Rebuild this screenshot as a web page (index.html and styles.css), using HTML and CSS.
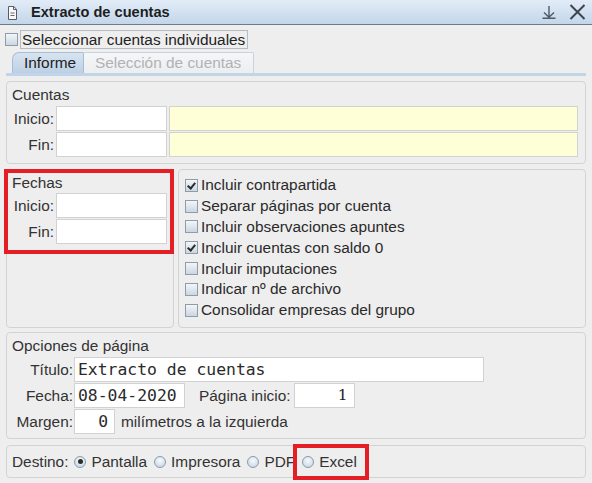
FILE: index.html
```html
<!DOCTYPE html>
<html lang="es">
<head>
<meta charset="utf-8">
<title>Extracto de cuentas</title>
<link rel="stylesheet" href="styles.css">
</head>
<body>
<div class="titlebar">
  <svg class="doc-icon" width="11" height="14" viewBox="0 0 11 14"><path d="M1.5 0.5H6.8L9.5 3.2V13.5H1.5Z" fill="#f6f8fa" stroke="#5c5c5c"/><path d="M6.5 0.5V3.5H9.5" fill="none" stroke="#5c5c5c"/><path d="M3.5 7H7.5M3.5 9.5H7.5" stroke="#6a6a6a"/></svg>
  <span class="title">Extracto de cuentas</span>
  <span class="spacer"></span>
  <svg class="tb-btn" width="16" height="14" viewBox="0 0 16 14"><path d="M8 1V12M3 7.5L8 12.2L13 7.5M1.5 13.2H14.5" fill="none" stroke="#505a64" stroke-width="1.4"/></svg>
  <svg class="tb-btn close" width="17" height="16" viewBox="0 0 17 16"><path d="M1.5 1L15.5 15M15.5 1L1.5 15" fill="none" stroke="#3c444c" stroke-width="2"/></svg>
</div>

<div class="selrow">
  <span class="cb"></span>
  <span class="sel-label">Seleccionar cuentas individuales</span>
</div>

<div class="tabs">
  <div class="tab active">Informe</div>
  <div class="tab disabled">Selección de cuentas</div>
</div>
<div class="tabline"></div>

<div class="main">
  <div class="panel cuentas">
    <div class="ptitle">Cuentas</div>
    <div class="frow"><span class="lbl">Inicio:</span><span class="inp w111"></span><span class="inp yellow grow"></span></div>
    <div class="frow"><span class="lbl">Fin:</span><span class="inp w111"></span><span class="inp yellow grow"></span></div>
  </div>

  <div class="mid">
    <div class="panel fechas">
      <div class="ptitle">Fechas</div>
      <div class="frow"><span class="lbl">Inicio:</span><span class="inp w111"></span></div>
      <div class="frow"><span class="lbl">Fin:</span><span class="inp w111"></span></div>
    </div>
    <div class="panel checks">
      <div class="chk"><span class="cb on"></span>Incluir contrapartida</div>
      <div class="chk"><span class="cb"></span>Separar páginas por cuenta</div>
      <div class="chk"><span class="cb"></span>Incluir observaciones apuntes</div>
      <div class="chk"><span class="cb on"></span>Incluir cuentas con saldo 0</div>
      <div class="chk"><span class="cb"></span>Incluir imputaciones</div>
      <div class="chk"><span class="cb"></span>Indicar nº de archivo</div>
      <div class="chk"><span class="cb"></span>Consolidar empresas del grupo</div>
    </div>
  </div>

  <div class="panel opciones">
    <div class="ptitle">Opciones de página</div>
    <div class="orow"><span class="olbl">Título:</span><span class="inp mono w410">Extracto de cuentas</span></div>
    <div class="orow"><span class="olbl">Fecha:</span><span class="inp mono w111">08-04-2020</span><span class="txt pag">Página inicio:</span><span class="inp serif right w61">1</span></div>
    <div class="orow"><span class="olbl">Margen:</span><span class="inp mono right w41">0</span><span class="txt mm">milímetros a la izquierda</span></div>
  </div>

  <div class="panel destino">
    <span class="dlbl">Destino:</span>
    <span class="rb on"></span><span class="rtxt">Pantalla</span>
    <span class="rb"></span><span class="rtxt">Impresora</span>
    <span class="rb"></span><span class="rtxt">PDF</span>
    <span class="rb"></span><span class="rtxt">Excel</span>
  </div>
</div>

<div class="mark mark-fechas"></div>
<div class="mark mark-excel"></div>
</body>
</html>
```

FILE: styles.css
```css
* { box-sizing: border-box; }
html, body { margin: 0; padding: 0; }
body {
  width: 592px;
  height: 483px;
  overflow: hidden;
  position: relative;
  background: #eeeeee;
  font-family: "Liberation Sans", Arial, sans-serif;
  font-size: 15.4px;
  color: #333333;
}

.titlebar {
  height: 25px;
  border-bottom: 1px solid #6e7c8a;
  background: linear-gradient(#e2ecf7, #c3d6ea);
  display: flex;
  align-items: center;
  padding: 0 6px 0 7px;
}
.doc-icon { display: block; margin-top: 1px; }
.title {
  margin-left: 13px;
  font-weight: bold;
  font-size: 14.6px;
  color: #1e1e1e;
}
.spacer { flex: 1; }
.tb-btn { display: block; }
.tb-btn.close { margin-left: 12px; }

.selrow {
  display: flex;
  align-items: center;
  height: 19px;
  margin-top: 5px;
  padding-left: 5px;
}
.sel-label {
  margin-left: 2px;
  border: 1px solid #b6bcc2;
  height: 19px;
  line-height: 17px;
  padding: 0 2px 0 1px;
  color: #222;
}

.cb {
  display: inline-block;
  width: 13px;
  height: 13px;
  border: 1px solid #8f9caa;
  background: linear-gradient(#f3f6f9, #cbd6e2);
  flex: none;
  position: relative;
}
.cb.on::after {
  content: "";
  position: absolute;
  left: 3px;
  top: 1px;
  width: 3px;
  height: 6px;
  border-right: 2px solid #2a2a2a;
  border-bottom: 2px solid #2a2a2a;
  transform: rotate(40deg);
}

.tabs {
  display: flex;
  margin-top: 3px;
  padding-left: 12px;
  height: 21px;
}
.tab {
  height: 21px;
  line-height: 20px;
  border: 1px solid #c9d3de;
  border-bottom: none;
  border-radius: 7px 2px 0 0;
  white-space: nowrap;
}
.tab.active {
  width: 72px;
  padding: 0 0 0 11px;
  background: linear-gradient(#d7e4f1, #bcd0e5);
  border-color: #a9bdd2;
  color: #222;
}
.tab.disabled {
  width: 170px;
  padding: 0 0 0 11px;
  border-radius: 0 2px 0 0;
  border-left: none;
  background: linear-gradient(#f4f6f8, #eceef0);
  color: #b0b2b4;
}
.tabline {
  height: 3px;
  margin: 0 6px;
  background: #c2d4e8;
}

.main {
  display: flex;
  flex-direction: column;
  padding: 5px 6px 0 6px;
}
.panel {
  border: 1px solid #d3d3d3;
  border-radius: 4px;
  background: #eeeeee;
}
.ptitle { height: 18px; line-height: 18px; }

.cuentas {
  height: 83px;
  padding: 4px 7px 5px 5px;
}
.frow {
  display: flex;
  align-items: center;
  height: 25px;
  margin-top: 1px;
}
.ptitle + .frow { margin-top: 2px; }
.lbl {
  width: 43px;
  text-align: right;
  padding-right: 1px;
  margin-right: 1px;
}
.inp {
  display: block;
  height: 25px;
  border: 1px solid #d2d2d2;
  background: #ffffff;
  color: #222;
}
.inp.yellow { background: #ffffd7; margin-left: 2px; }
.grow { flex: 1; }
.w111 { width: 111px; }
.w410 { width: 410px; }
.w61 { width: 61px; }
.w41 { width: 41px; }

.mid {
  display: flex;
  gap: 4px;
  margin-top: 5px;
  height: 159px;
}
.fechas {
  width: 168px;
  padding: 4px 5px 5px 5px;
}
.fechas .ptitle + .frow { margin-top: 1px; }
.checks {
  flex: 1;
  padding: 5px 5px 5px 6px;
}
.chk {
  display: flex;
  align-items: center;
  height: 20.8px;
  color: #2a2a2a;
}
.chk .cb { margin-right: 3px; }

.opciones {
  margin-top: 4px;
  height: 107px;
  padding: 4px 5px 3px 5px;
}
.orow {
  display: flex;
  align-items: center;
  height: 25px;
  margin-top: 1px;
}
.opciones .ptitle + .orow { margin-top: 2px; }
.olbl {
  width: 61px;
  text-align: right;
  margin-right: 1px;
}
.mono {
  font-family: "DejaVu Sans Mono", monospace;
  font-size: 16.4px;
  line-height: 23px;
  padding-left: 3px;
  white-space: pre;
  color: #2a2a2a;
}
.serif {
  font-family: "DejaVu Serif", serif;
  font-size: 15.5px;
  line-height: 23px;
}
.right { text-align: right; padding-right: 6px; }
.pag { margin-left: 14px; margin-right: 3px; }
.mm { margin-left: 6px; }

.destino {
  margin-top: 6px;
  height: 33px;
  display: flex;
  align-items: center;
  padding-left: 5px;
}
.dlbl { margin-right: 6px; }
.rb {
  display: inline-block;
  width: 12px;
  height: 12px;
  border-radius: 50%;
  border: 1px solid #8b9aab;
  background: radial-gradient(circle at 50% 35%, #f6f9fc, #c3d2e2);
  position: relative;
  flex: none;
  margin-right: 5px;
}
.rb.on::after {
  content: "";
  position: absolute;
  left: 2.5px;
  top: 2.5px;
  width: 5px;
  height: 5px;
  border-radius: 50%;
  background: #2a2a2a;
}
.rtxt { margin-right: 7px; }

.mark {
  position: absolute;
  border: 4px solid #e31e25;
}
.mark-fechas {
  left: 4px;
  top: 169px;
  width: 170px;
  height: 85px;
}
.mark-excel {
  left: 293px;
  top: 444px;
  width: 76px;
  height: 36px;
}
```
